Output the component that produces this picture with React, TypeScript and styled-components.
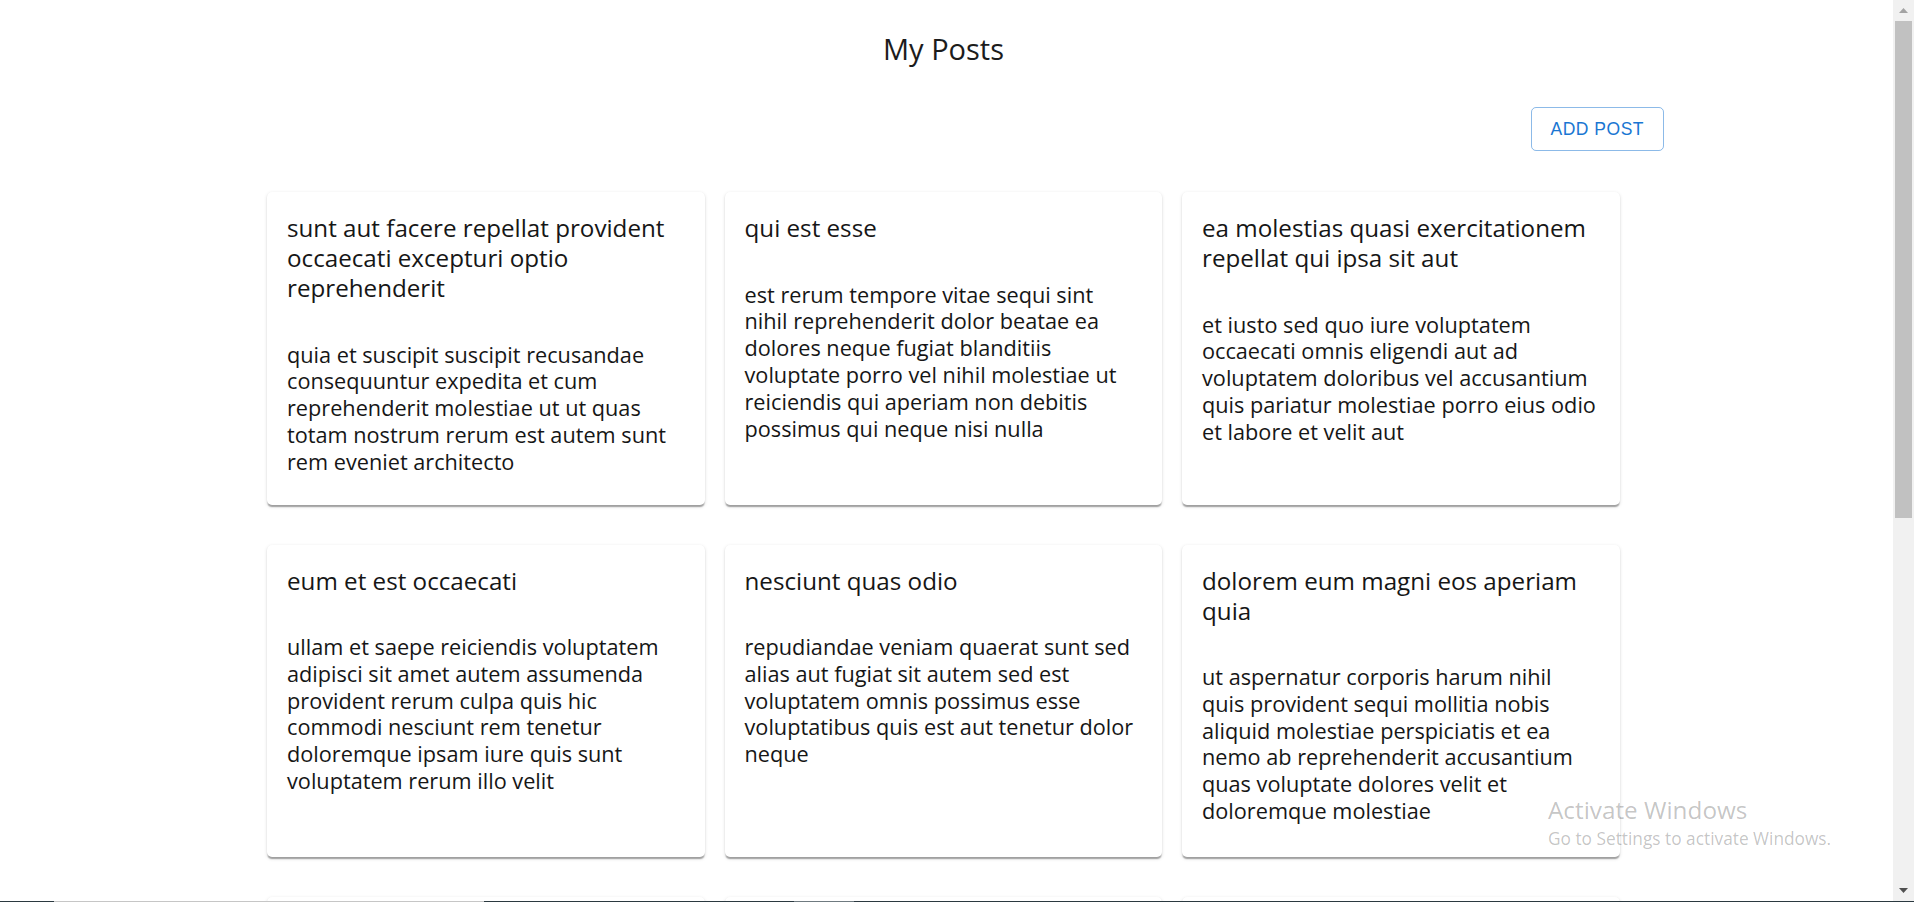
import React from "react";
import styled, { createGlobalStyle } from "styled-components";

const GlobalStyle = createGlobalStyle`
  html, body {
    margin: 0;
    padding: 0;
    background: #ffffff;
    overflow: hidden;
  }
  body {
    font-family: "Open Sans", "Noto Sans", sans-serif;
  }
  * { box-sizing: border-box; }
`;

type Post = { id: number; title: string; body: string };

const posts: Post[] = [
  {
    id: 1,
    title: "sunt aut facere repellat provident occaecati excepturi optio reprehenderit",
    body: "quia et suscipit suscipit recusandae consequuntur expedita et cum reprehenderit molestiae ut ut quas totam nostrum rerum est autem sunt rem eveniet architecto",
  },
  {
    id: 2,
    title: "qui est esse",
    body: "est rerum tempore vitae sequi sint nihil reprehenderit dolor beatae ea dolores neque fugiat blanditiis voluptate porro vel nihil molestiae ut reiciendis qui aperiam non debitis possimus qui neque nisi nulla",
  },
  {
    id: 3,
    title: "ea molestias quasi exercitationem repellat qui ipsa sit aut",
    body: "et iusto sed quo iure voluptatem occaecati omnis eligendi aut ad voluptatem doloribus vel accusantium quis pariatur molestiae porro eius odio et labore et velit aut",
  },
  {
    id: 4,
    title: "eum et est occaecati",
    body: "ullam et saepe reiciendis voluptatem adipisci sit amet autem assumenda provident rerum culpa quis hic commodi nesciunt rem tenetur doloremque ipsam iure quis sunt voluptatem rerum illo velit",
  },
  {
    id: 5,
    title: "nesciunt quas odio",
    body: "repudiandae veniam quaerat sunt sed alias aut fugiat sit autem sed est voluptatem omnis possimus esse voluptatibus quis est aut tenetur dolor neque",
  },
  {
    id: 6,
    title: "dolorem eum magni eos aperiam quia",
    body: "ut aspernatur corporis harum nihil quis provident sequi mollitia nobis aliquid molestiae perspiciatis et ea nemo ab reprehenderit accusantium quas voluptate dolores velit et doloremque molestiae",
  },
  {
    id: 7,
    title: "magnam facilis autem",
    body: "dolore placeat quibusdam ea quo vitae magni quis enim qui quis quo nemo aut saepe quidem repellat excepturi ut quia sunt ut sequi eos ea sed quas",
  },
  {
    id: 8,
    title: "dolorem dolore est ipsam",
    body: "dignissimos aperiam dolorem qui eum facilis quibusdam animi sint suscipit qui sint possimus cum quaerat magni maiores excepturi ipsam ut commodi dolor voluptatum modi aut vitae",
  },
  {
    id: 9,
    title: "nesciunt iure omnis dolorem tempora et accusantium",
    body: "consectetur animi nesciunt iure dolore enim quia ad veniam autem ut quam aut nobis et est aut quod aut provident voluptas autem voluptas",
  },
];

const Frame = styled.div`
  position: relative;
  display: flex;
  flex-direction: column;
  width: 100%;
  height: 902px;
  overflow: hidden;
`;

const Viewport = styled.div`
  display: flex;
  height: 901px;
  min-height: 0;
`;

const Page = styled.main`
  flex: 1;
  min-width: 0;
  overflow: hidden;
`;

const PageTitle = styled.h1`
  margin: 29px 0 0;
  padding-right: 6px;
  text-align: center;
  font-family: "Open Sans", sans-serif;
  font-weight: 500;
  font-size: 29px;
  line-height: 40px;
  color: #1c1c1c;
`;

const Container = styled.div`
  max-width: 1434px;
  margin: 0 auto;
`;

const Toolbar = styled.div`
  display: flex;
  justify-content: flex-end;
  margin-top: 38px;
`;

const AddButton = styled.button`
  height: 44px;
  padding: 0 18.5px;
  border: 1px solid rgba(25, 118, 210, 0.5);
  border-radius: 5px;
  background: transparent;
  color: #1976d2;
  font-family: "Liberation Sans", Arial, sans-serif;
  font-size: 17.5px;
  font-weight: 400;
  letter-spacing: 0.5px;
  text-transform: uppercase;
  cursor: pointer;
`;

const Grid = styled.section`
  display: grid;
  grid-template-columns: repeat(3, 437.5px);
  column-gap: 20px;
  row-gap: 40px;
  margin-top: 41px;
  padding-left: 37.5px;
`;

const Card = styled.article`
  height: 312.5px;
  padding: 21px 23px 0 20px;
  background: #ffffff;
  border-radius: 5px;
  box-shadow: 0 2.5px 1.25px -1.25px rgba(0, 0, 0, 0.2),
    0 1.25px 1.25px 0 rgba(0, 0, 0, 0.14),
    0 1.25px 3.75px 0 rgba(0, 0, 0, 0.12);
  color: #161616;
`;

const CardTitle = styled.h2`
  margin: 0 0 38.6px;
  font-family: "Open Sans", sans-serif;
  font-weight: 400;
  font-size: 24.2px;
  line-height: 30px;
`;

const CardBody = styled.p`
  margin: 0;
  font-family: "Open Sans", sans-serif;
  font-weight: 400;
  font-size: 21.7px;
  line-height: 26.8px;
`;

const Scrollbar = styled.div`
  flex: 0 0 21px;
  display: flex;
  flex-direction: column;
  background: #f1f1f1;
`;

const ScrollArrow = styled.div`
  height: 21px;
  display: flex;
  align-items: center;
  justify-content: center;
`;

const ScrollTrack = styled.div`
  flex: 1;
  display: flex;
  flex-direction: column;
  align-items: center;
`;

const Thumb = styled.div`
  width: 17px;
  height: 497px;
  background: #c1c1c1;
`;

const TaskbarEdge = styled.div`
  height: 1px;
  background: linear-gradient(
    to right,
    #2b3940 0px,
    #2b3940 54px,
    #c6c6c6 54px,
    #c6c6c6 484px,
    #2b3940 484px,
    #2b3940 794px,
    #6f7a80 794px,
    #6f7a80 854px,
    #2b3940 854px
  );
`;

const Watermark = styled.div`
  position: absolute;
  left: 1548px;
  top: 795px;
  pointer-events: none;
  color: rgba(0, 0, 0, 0.24);
  font-family: "Open Sans", sans-serif;
`;

const WatermarkTitle = styled.div`
  font-size: 24.3px;
  line-height: 29px;
  font-weight: 400;
`;

const WatermarkHint = styled.div`
  margin-top: 1px;
  font-size: 17.3px;
  line-height: 28px;
  font-weight: 400;
`;

const Triangle: React.FC<{ up?: boolean; color: string }> = ({ up, color }) => (
  <svg width="9" height="5" viewBox="0 0 9 5">
    {up ? (
      <polygon points="0,5 4.5,0 9,5" fill={color} />
    ) : (
      <polygon points="0,0 9,0 4.5,5" fill={color} />
    )}
  </svg>
);

export default function App() {
  return (
    <>
      <GlobalStyle />
      <Frame>
        <Viewport>
          <Page>
            <PageTitle>My Posts</PageTitle>
            <Container>
              <Toolbar>
                <AddButton type="button">Add Post</AddButton>
              </Toolbar>
              <Grid>
                {posts.map((p) => (
                  <Card key={p.id}>
                    <CardTitle>{p.title}</CardTitle>
                    <CardBody>{p.body}</CardBody>
                  </Card>
                ))}
              </Grid>
            </Container>
          </Page>
          <Scrollbar>
            <ScrollArrow>
              <Triangle up color="#a3a3a3" />
            </ScrollArrow>
            <ScrollTrack>
              <Thumb />
            </ScrollTrack>
            <ScrollArrow>
              <Triangle color="#505050" />
            </ScrollArrow>
          </Scrollbar>
        </Viewport>
        <TaskbarEdge />
        <Watermark>
          <WatermarkTitle>Activate Windows</WatermarkTitle>
          <WatermarkHint>Go to Settings to activate Windows.</WatermarkHint>
        </Watermark>
      </Frame>
    </>
  );
}
